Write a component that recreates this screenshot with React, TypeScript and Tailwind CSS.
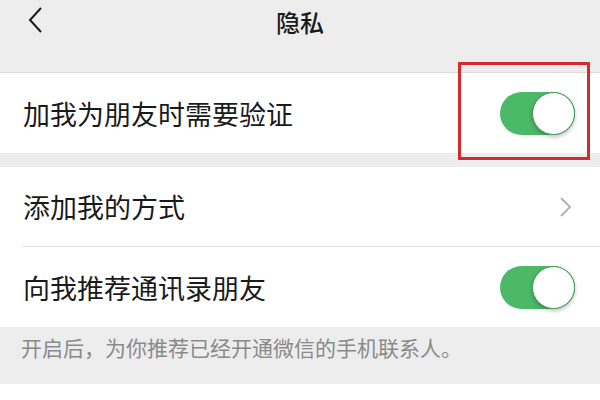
import React from "react";

function Toggle() {
  return (
    <div className="relative w-[75px] h-[43px] rounded-full bg-[#4cb968]">
      <div className="absolute right-0 top-0 w-[43px] h-[43px] rounded-full bg-white border border-[#3e9a56] shadow-[0_2px_4px_rgba(0,0,0,0.25)]" />
    </div>
  );
}

export default function App() {
  return (
    <div
      className="relative w-[600px] h-[400px] overflow-hidden bg-[#ededed] text-[#1a1a1a]"
      style={{ fontFamily: '"Noto Sans CJK SC", "Noto Sans", sans-serif' }}
    >
      <div className="relative h-[73px] border-b border-[#d9d9d9]">
        <div className="flex h-[44px] items-center justify-center">
          <span className="text-[24px] font-medium leading-none">隐私</span>
        </div>
        <svg className="absolute left-[26px] top-[6px]" width="20" height="28" viewBox="0 0 20 28">
          <path d="M15 2 L4 14 L15 26" fill="none" stroke="#1a1a1a" strokeWidth="2" />
        </svg>
      </div>
      <div className="flex h-[80px] items-center justify-between bg-white pl-[23px] pr-[25px]">
        <span className="text-[27px] leading-none">加我为朋友时需要验证</span>
        <Toggle />
      </div>
      <div className="h-[14px]" />
      <div className="bg-white pl-[22px]">
        <div className="flex h-[80px] items-center justify-between pl-[1px] pr-[27px] border-b border-[#e5e5e5]">
          <span className="text-[27px] leading-none">添加我的方式</span>
          <svg width="14" height="22" viewBox="0 0 14 22">
            <path d="M2 2 L11 11 L2 20" fill="none" stroke="#b2b2b2" strokeWidth="2" />
          </svg>
        </div>
        <div className="flex h-[80px] items-center justify-between pl-[1px] pr-[25px]">
          <span className="text-[27px] leading-none">向我推荐通讯录朋友</span>
          <Toggle />
        </div>
      </div>
      <div className="h-[57px] pl-[21px] pt-[10px]">
        <span className="text-[21px] leading-none text-[#8a8a8a]">开启后，为你推荐已经开通微信的手机联系人。</span>
      </div>
      <div className="h-[20px] bg-white" />
      <div className="absolute left-[458px] top-[62px] w-[132px] h-[98px] border-[3px] border-[#d42a2f]" />
    </div>
  );
}
